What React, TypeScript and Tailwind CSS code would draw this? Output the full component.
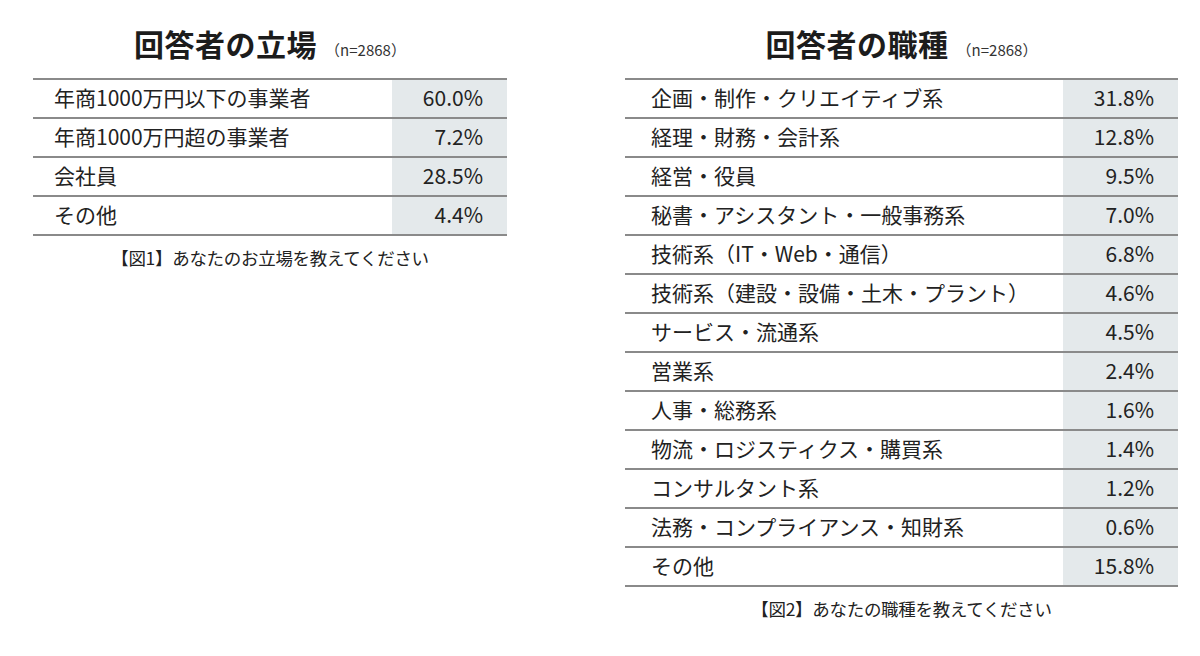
import React from 'react';

type Row = { label: string; value: string };

const positions: Row[] = [
  { label: '年商1000万円以下の事業者', value: '60.0%' },
  { label: '年商1000万円超の事業者', value: '7.2%' },
  { label: '会社員', value: '28.5%' },
  { label: 'その他', value: '4.4%' },
];

const jobs: Row[] = [
  { label: '企画・制作・クリエイティブ系', value: '31.8%' },
  { label: '経理・財務・会計系', value: '12.8%' },
  { label: '経営・役員', value: '9.5%' },
  { label: '秘書・アシスタント・一般事務系', value: '7.0%' },
  { label: '技術系（IT・Web・通信）', value: '6.8%' },
  { label: '技術系（建設・設備・土木・プラント）', value: '4.6%' },
  { label: 'サービス・流通系', value: '4.5%' },
  { label: '営業系', value: '2.4%' },
  { label: '人事・総務系', value: '1.6%' },
  { label: '物流・ロジスティクス・購買系', value: '1.4%' },
  { label: 'コンサルタント系', value: '1.2%' },
  { label: '法務・コンプライアンス・知財系', value: '0.6%' },
  { label: 'その他', value: '15.8%' },
];

const SurveyTable = ({
  title,
  rows,
  caption,
  width,
  labelPad,
}: {
  title: string;
  rows: Row[];
  caption: string;
  width: string;
  labelPad: string;
}) => (
  <div className={`flex flex-col ${width}`}>
    <div className="mt-[28px] mb-[16px] flex items-baseline justify-center">
      <h2 className="text-[30px] leading-[30px] font-bold tracking-[0.5px] text-[#1c1c1c]">{title}</h2>
      <span className="ml-[8px] text-[15px] text-[#333]">（n=2868）</span>
    </div>
    <div className="border-t-2 border-[#8a8a8a]">
      {rows.map((row) => (
        <div key={row.label} className="flex h-[39px] border-b-2 border-[#8a8a8a]">
          <div className={`flex flex-1 items-center ${labelPad} text-[21px] text-[#222]`}>{row.label}</div>
          <div className="flex w-[115px] items-center justify-end bg-[#e4e9eb] pr-[24px] text-[21px] text-[#222]">
            {row.value}
          </div>
        </div>
      ))}
    </div>
    <p className="mt-[9px] text-center text-[17.5px] tracking-[-0.3px] text-[#222]">{caption}</p>
  </div>
);

export default function App() {
  return (
    <div
      className="flex h-[656px] w-[1200px] items-start bg-white pl-[33px]"
      style={{ fontFamily: '"Noto Sans CJK JP", "Noto Sans", sans-serif' }}
    >
      <SurveyTable
        title="回答者の立場"
        rows={positions}
        caption="【図1】あなたのお立場を教えてください"
        width="w-[474px]"
        labelPad="pl-[21px]"
      />
      <div className="ml-[118px]">
        <SurveyTable
          title="回答者の職種"
          rows={jobs}
          caption="【図2】あなたの職種を教えてください"
          width="w-[553px]"
          labelPad="pl-[26px]"
        />
      </div>
    </div>
  );
}
